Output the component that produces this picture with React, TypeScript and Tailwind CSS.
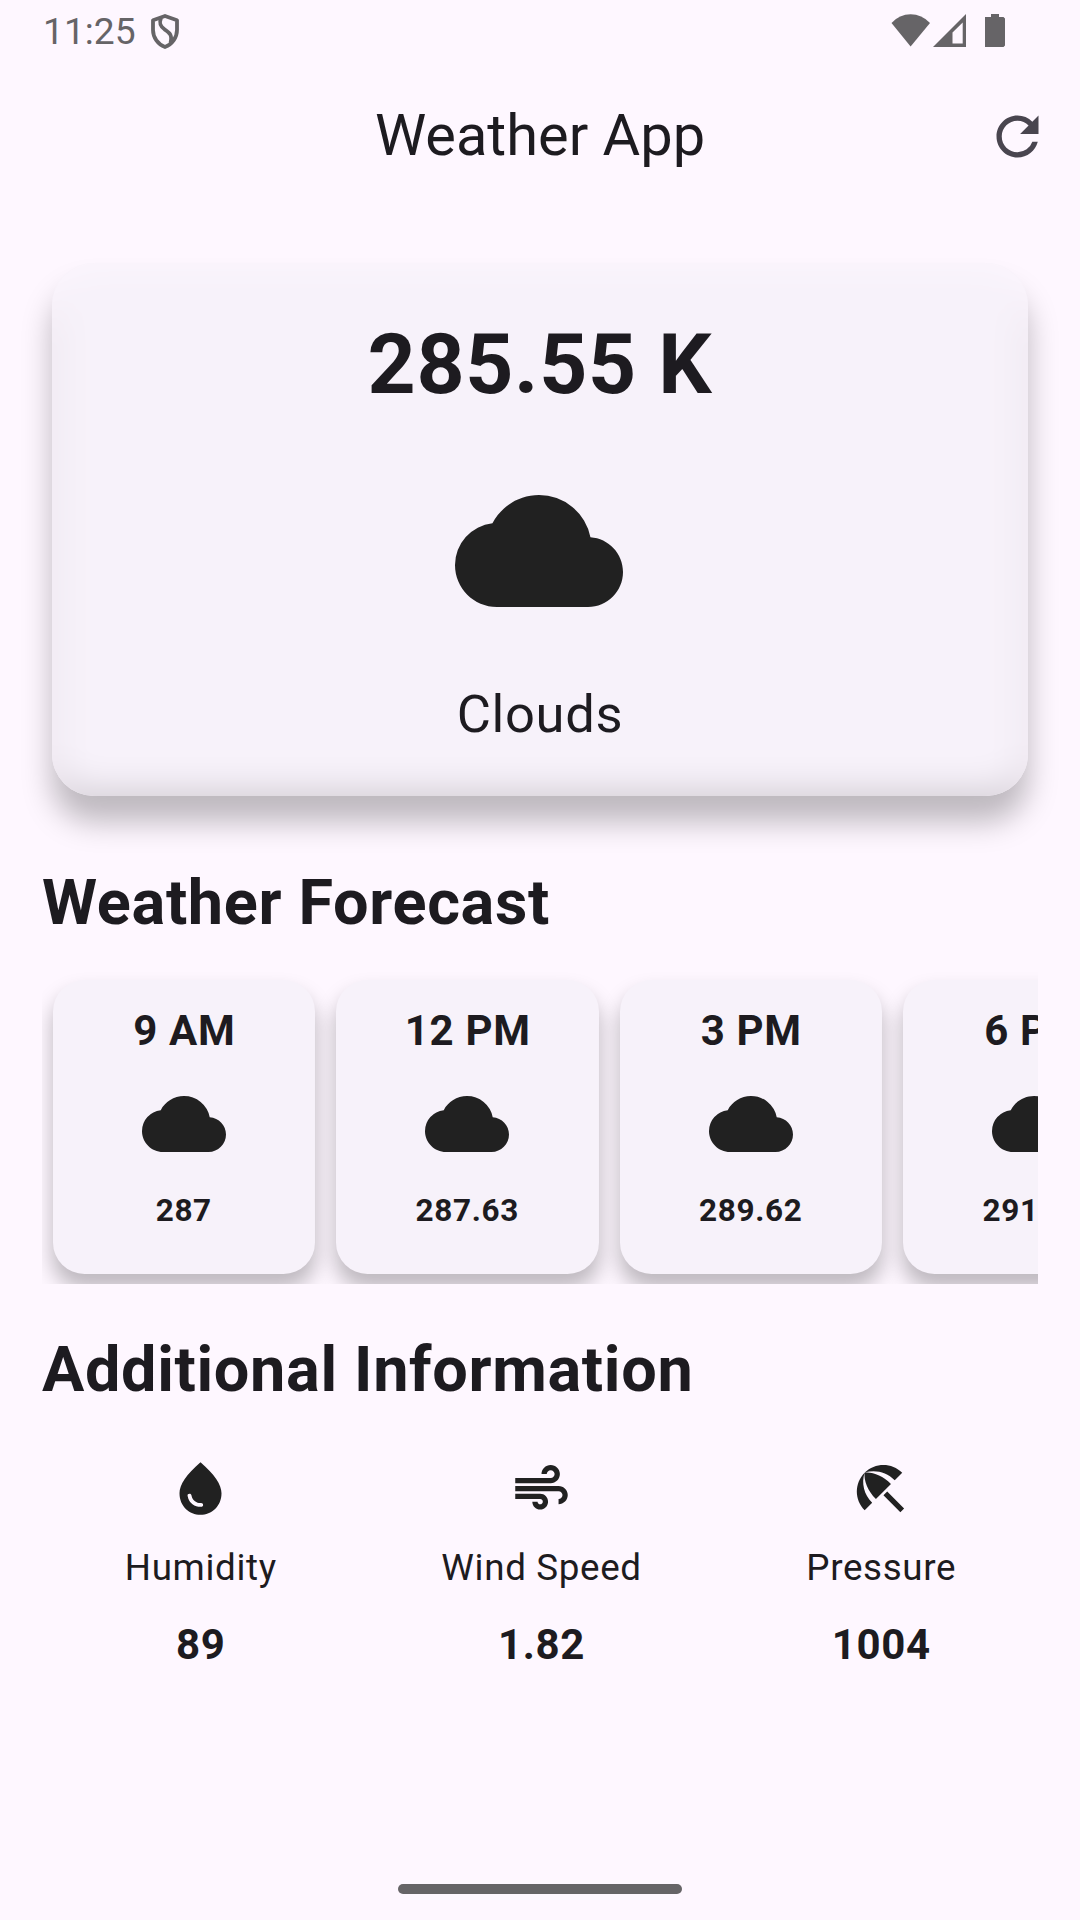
import React from "react";
import { MdAir, MdBeachAccess, MdCloud, MdRefresh, MdWaterDrop } from "react-icons/md";
import type { IconType } from "react-icons";

const forecast = [
  { time: "9 AM", temp: "287" },
  { time: "12 PM", temp: "287.63" },
  { time: "3 PM", temp: "289.62" },
  { time: "6 PM", temp: "291.31" },
];

const details: { icon: IconType; label: string; value: string }[] = [
  { icon: MdWaterDrop, label: "Humidity", value: "89" },
  { icon: MdAir, label: "Wind Speed", value: "1.82" },
  { icon: MdBeachAccess, label: "Pressure", value: "1004" },
];

function StatusBar() {
  return (
    <div className="flex h-[63px] items-start justify-between pl-[43px] pr-[74px] text-[#666467]">
      <div className="flex items-start">
        <span className="mt-[10px] text-[37.2px] leading-[43px]">11:25</span>
        <svg className="ml-[14px] mt-[13px]" width="30" height="37" viewBox="0 0 30 37" fill="none" stroke="currentColor" strokeWidth="3.8" strokeLinejoin="round">
          <path d="M15 3 27 7.200V17C27 24.500 22 31.500 15 34 8 31.500 3 24.500 3 17V7.200Z" />
          <path d="M11 5C9 10 10 13 14.500 16.300C20 20 22.500 22 20.500 30" />
        </svg>
      </div>
      <div className="flex items-start">
        <svg className="mt-[14px]" width="40" height="33" viewBox="0 0 40 33" fill="currentColor">
          <path d="M0.500 9Q8.500 0.300 19.600 0.300T39 9L19.600 32.500Z" />
        </svg>
        <svg className="ml-[2px] mt-[14px]" width="34" height="33" viewBox="0 0 34 33" fill="currentColor">
          <path fillRule="evenodd" d="M0 33 33 0V33ZM19.500 18.500V29.500H29.700V8.500Z" />
        </svg>
        <svg className="ml-[18px] mr-px mt-[14px]" width="20" height="33" viewBox="0 0 20 33" fill="currentColor">
          <path d="M6 0h8v3h4.500l1.500 1.500v27L18.500 33H0V3h6Z" />
        </svg>
      </div>
    </div>
  );
}

/** Frosted rim: a blurred copy of the card and its shadow, clipped to the card. */
function FrostedRim() {
  return (
    <div className="absolute inset-0 -z-10 overflow-hidden rounded-[42px]">
      <div className="absolute -inset-[80px] bg-[#fef7ff] p-[80px] blur-[18px]">
        <div className="h-full rounded-[42px] bg-[#f7f2fa] shadow-[0_26px_30px_0px_rgba(0,0,0,0.28)]" />
      </div>
    </div>
  );
}

function ForecastCard({ time, temp }: { time: string; temp: string }) {
  return (
    <div className="m-[10.5px] flex h-[294px] w-[262.5px] shrink-0 flex-col items-center gap-[21px] rounded-[31.5px] bg-[#f7f2fa] pt-[21px] shadow-[0_14px_20px_1px_rgba(0,0,0,0.25)]">
      <span className="pl-px text-[42px] font-bold leading-[60px]">{time}</span>
      <MdCloud size={84} color="#212121" />
      <span className="mt-px text-[31.5px] font-bold leading-[45px]">{temp}</span>
    </div>
  );
}

export default function App() {
  return (
    <div className="flex h-[1920px] w-[1080px] flex-col overflow-hidden bg-[#fef7ff] font-['Roboto',sans-serif] text-[#1d1b20]">
      <StatusBar />
      <header className="grid h-[147px] grid-cols-[94px_1fr_94px] items-center">
        <span />
        <h1 className="mb-[2px] text-center text-[57.75px] leading-[73px]">Weather App</h1>
        <MdRefresh size={63} color="#49454f" />
      </header>

      <main className="flex flex-col px-[42px] pt-[42px] tracking-[0.656px]">
        <div className="px-[10px] py-[10.5px]">
          <section className="relative isolate flex h-[533px] flex-col items-center gap-[42px] rounded-[42px] bg-[#f7f2fa] pt-[42px] shadow-[0_26px_30px_0px_rgba(0,0,0,0.255)]">
            <FrostedRim />
            <span className="text-[84px] font-bold leading-[120px]">285.55 K</span>
            <MdCloud className="mr-[2px]" size={168} color="#212121" />
            <span className="text-[52.5px] leading-[75px]">Clouds</span>
          </section>
        </div>

        <h2 className="mt-[52px] text-[63px] font-bold leading-[90px]">Weather Forecast</h2>
        <div className="mt-[21px] flex overflow-hidden">
          {forecast.map((f) => (
            <ForecastCard key={f.time} {...f} />
          ))}
        </div>

        <h2 className="mt-[41px] text-[63px] font-bold leading-[90px]">Additional Information</h2>
        <div className="mt-[42px] flex justify-around">
          {details.map(({ icon: Icon, label, value }) => (
            <div key={label} className="flex flex-col items-center gap-[21px]">
              <Icon size={63} color="#212121" />
              <span className="-mb-px mt-px pl-px text-[36.75px] leading-[52.5px]">{label}</span>
              <span className="pl-px text-[42px] font-bold leading-[60px]">{value}</span>
            </div>
          ))}
        </div>
      </main>

      <div className="mx-auto mb-[26px] mt-auto h-[10px] w-[284px] rounded-full bg-[#666467]" />
    </div>
  );
}
